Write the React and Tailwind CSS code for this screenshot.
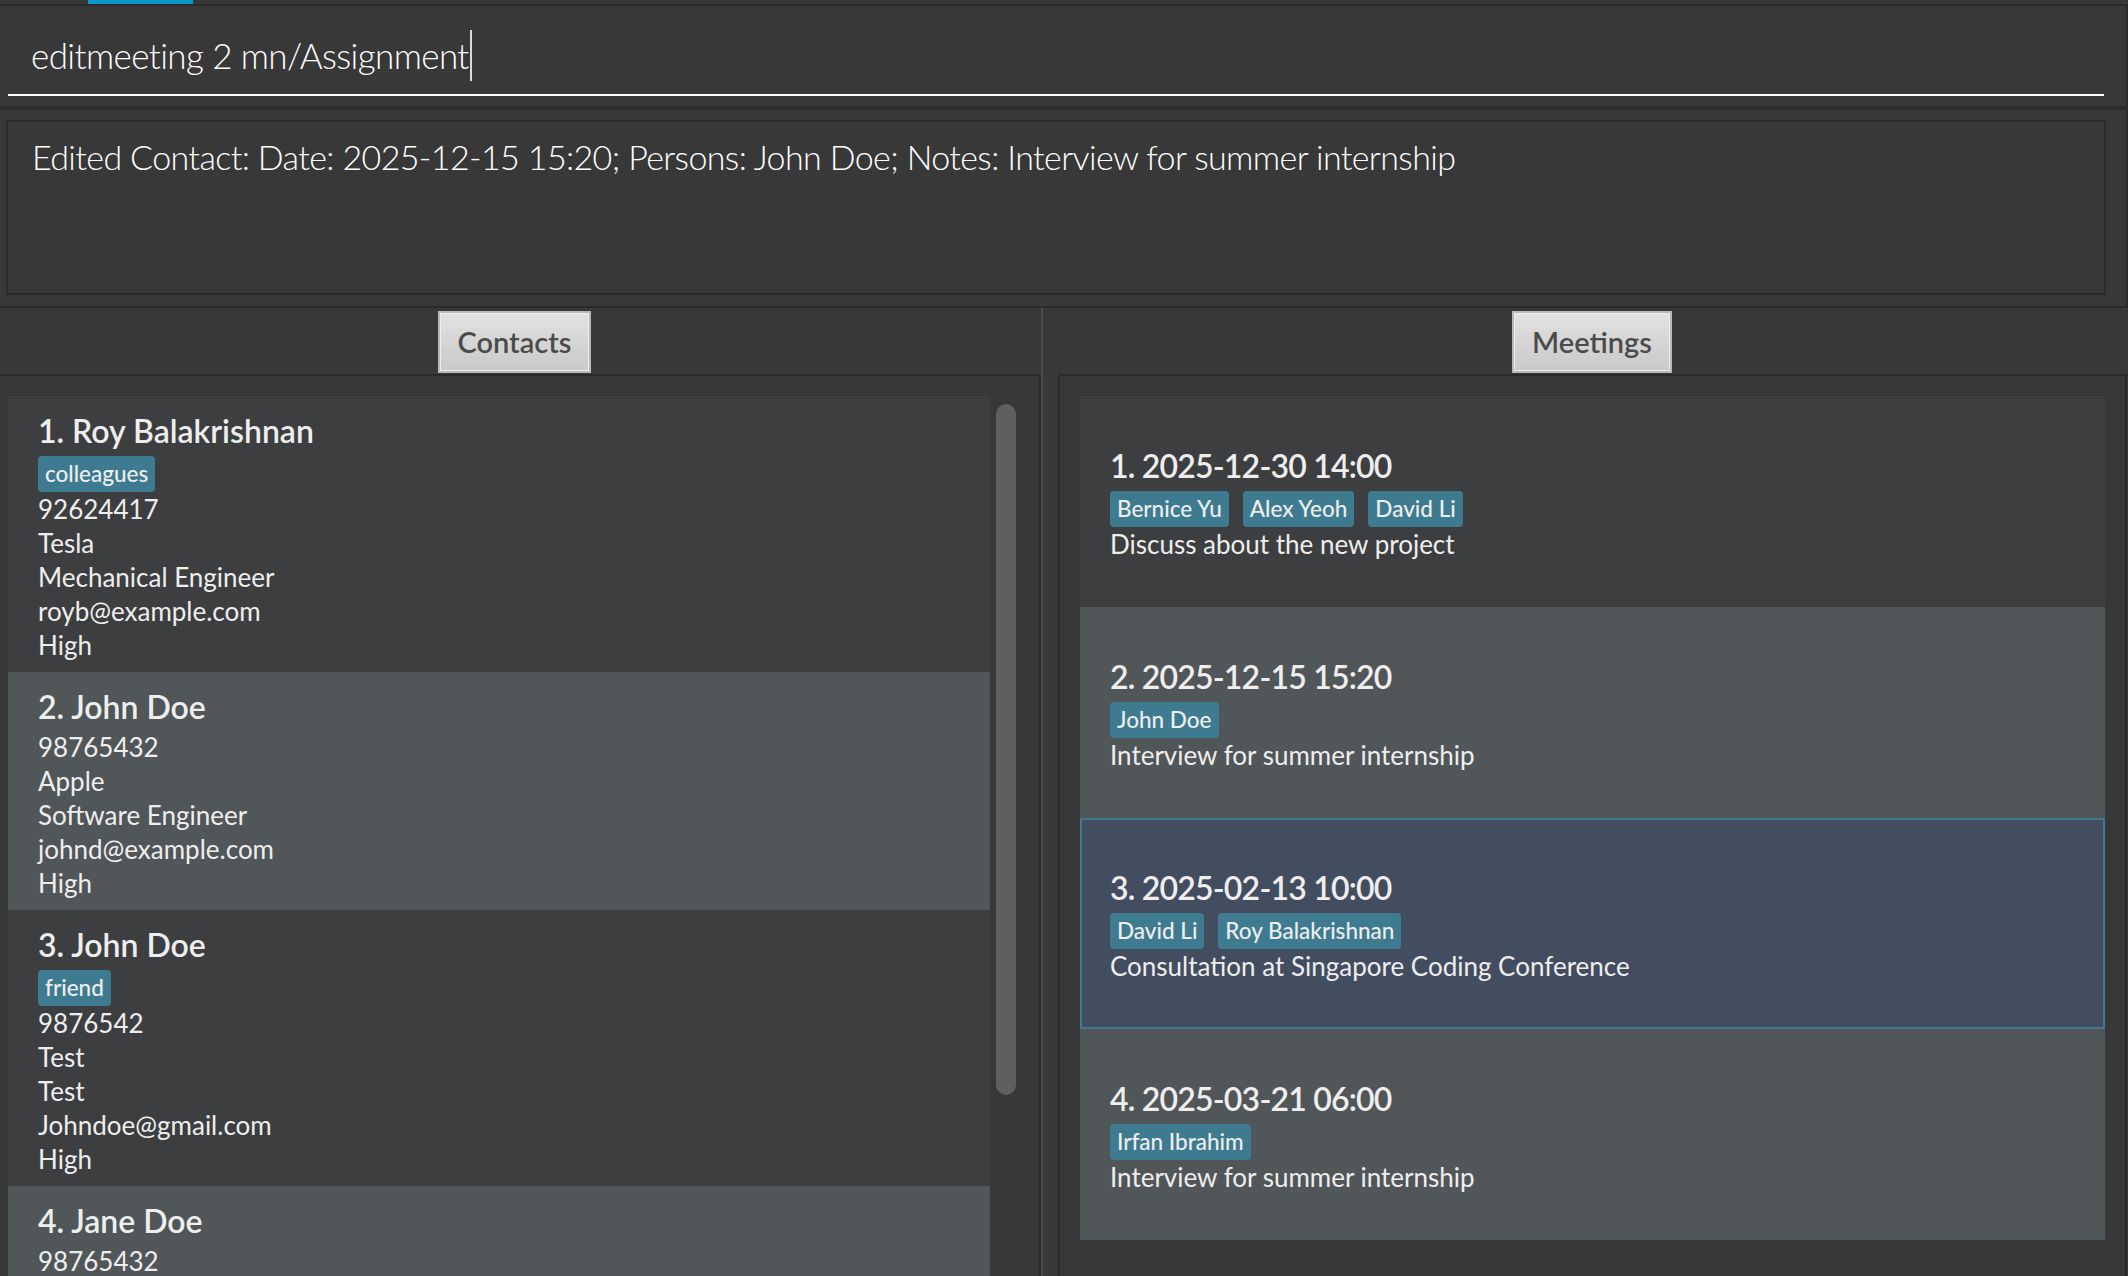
const contacts = [
  {
    name: 'Roy Balakrishnan',
    tags: ['colleagues'],
    lines: ['92624417', 'Tesla', 'Mechanical Engineer', 'royb@example.com', 'High'],
  },
  {
    name: 'John Doe',
    tags: [],
    lines: ['98765432', 'Apple', 'Software Engineer', 'johnd@example.com', 'High'],
  },
  {
    name: 'John Doe',
    tags: ['friend'],
    lines: ['9876542', 'Test', 'Test', 'Johndoe@gmail.com', 'High'],
  },
  {
    name: 'Jane Doe',
    tags: [],
    lines: ['98765432'],
  },
];

const meetings = [
  { when: '2025-12-30 14:00', people: ['Bernice Yu', 'Alex Yeoh', 'David Li'], notes: 'Discuss about the new project' },
  { when: '2025-12-15 15:20', people: ['John Doe'], notes: 'Interview for summer internship' },
  { when: '2025-02-13 10:00', people: ['David Li', 'Roy Balakrishnan'], notes: 'Consultation at Singapore Coding Conference', selected: true },
  { when: '2025-03-21 06:00', people: ['Irfan Ibrahim'], notes: 'Interview for summer internship' },
];

function Tags({ items }) {
  if (!items.length) return null;
  return (
    <div className="flex gap-[14px] pt-[2px]">
      {items.map((t) => (
        <span
          key={t}
          className="h-[36px] px-[7px] flex items-center rounded-[4px] bg-[#3e7b91] text-[22.5px] font-medium text-[#eeeeee]"
        >
          {t}
        </span>
      ))}
    </div>
  );
}

function PanelButton({ children }) {
  return (
    <div className="mt-[3px] h-[62px] px-[18px] flex items-center border-2 border-[#b9b9b9] bg-gradient-to-b from-[#e2e2e2] to-[#c9c9c9] shadow-[inset_0_0_0_1px_#ededed] text-[29px] font-semibold text-[#4b4b4b]">
      {children}
    </div>
  );
}

function ContactCard({ c, i }) {
  const bg = i % 2 === 0 ? 'bg-[#3c3e3f]' : 'bg-[#515658]';
  return (
    <div className={`${bg} pl-[30px] pt-[12px] pb-[10px] text-[#eeeeee]`}>
      <div className="h-[46px] leading-[46px] text-[32px] font-semibold">
        {i + 1}. {c.name}
      </div>
      <Tags items={c.tags} />
      {c.lines.map((l, k) => (
        <div key={k} className="h-[34px] leading-[34px] text-[26px]">
          {l}
        </div>
      ))}
    </div>
  );
}

function MeetingCard({ m, i }) {
  const bg = m.selected
    ? 'bg-[#424d5f] border-2 border-[#3e7b91] pl-[28px]'
    : i % 2 === 0
      ? 'bg-[#3c3e3f] pl-[30px]'
      : 'bg-[#515658] pl-[30px]';
  return (
    <div className={`${bg} h-[211px] flex flex-col justify-center text-[#eeeeee]`}>
      <div className="h-[46px] leading-[46px] text-[32px] font-semibold tracking-[-0.8px]">
        {i + 1}. {m.when}
      </div>
      <Tags items={m.people} />
      <div className="h-[34px] leading-[34px] text-[26px]">{m.notes}</div>
    </div>
  );
}

export default function App() {
  return (
    <div className="w-[2128px] h-[1276px] overflow-hidden bg-[#383838] flex flex-col font-[Lato,sans-serif]">
      {/* menu strip */}
      <div className="h-[4px] flex">
        <div className="ml-[88px] w-[105px] h-full bg-[#0a96c8]" />
      </div>
      <div className="h-[2px] bg-[#2b2b2b]" />

      {/* command box */}
      <div className="h-[100px] pl-[8px] pr-[22px] pt-[23px] border-r-2 border-[#2b2b2b]">
        <div className="h-[67px] border-b-2 border-white pl-[23px]">
          <div className="h-[52px] leading-[52px] text-[35px] font-light tracking-[-0.6px] text-white whitespace-nowrap flex items-center">
            <span>editmeeting 2 mn/Assignment</span>
            <span className="ml-[1px] w-[2px] h-[51px] bg-[#d8d8d8]" />
          </div>
        </div>
      </div>
      <div className="h-[4px] bg-[#2d2d2d]" />

      {/* result display */}
      <div className="h-[196px] pt-[10px] pb-[11px] pl-[6px] pr-[20px] border-r-2 border-[#2b2b2b]">
        <div className="h-full border-2 border-[#2b2b2b] pl-[24px] pt-[13px]">
          <div className="leading-[44px] text-[34px] font-light tracking-[-0.62px] text-white whitespace-nowrap">
            Edited Contact: Date: 2025-12-15 15:20; Persons: John Doe; Notes: Interview for summer internship
          </div>
        </div>
      </div>
      <div className="h-[2px] bg-[#2b2b2b]" />

      {/* panels */}
      <div className="flex-1 min-h-0 flex">
        {/* contacts */}
        <div className="w-[1041px] flex flex-col">
          <div className="h-[66px] flex justify-center pr-[12px]">
            <PanelButton>Contacts</PanelButton>
          </div>
          <div className="flex-1 min-h-0 overflow-hidden border-t-2 border-r-2 border-[#2b2b2b] pl-[8px] pt-[20px] flex">
            <div className="w-[982px] flex flex-col">
              {contacts.map((c, i) => (
                <ContactCard key={i} c={c} i={i} />
              ))}
            </div>
            <div className="ml-[6px] mt-[8px] w-[20px] h-[691px] rounded-[10px] bg-[#5f5f5f]" />
          </div>
        </div>

        <div className="w-[2px] bg-[#4a4a4a]" />

        {/* meetings */}
        <div className="flex-1 flex flex-col mr-[1px]">
          <div className="h-[66px] flex justify-center pl-[14px]">
            <PanelButton>Meetings</PanelButton>
          </div>
          <div className="flex-1 min-h-0 overflow-hidden ml-[15px] border-t-2 border-l-2 border-r-2 border-[#2b2b2b] px-[20px] pt-[20px] flex flex-col">
            {meetings.map((m, i) => (
              <MeetingCard key={i} m={m} i={i} />
            ))}
          </div>
        </div>
      </div>
    </div>
  );
}
